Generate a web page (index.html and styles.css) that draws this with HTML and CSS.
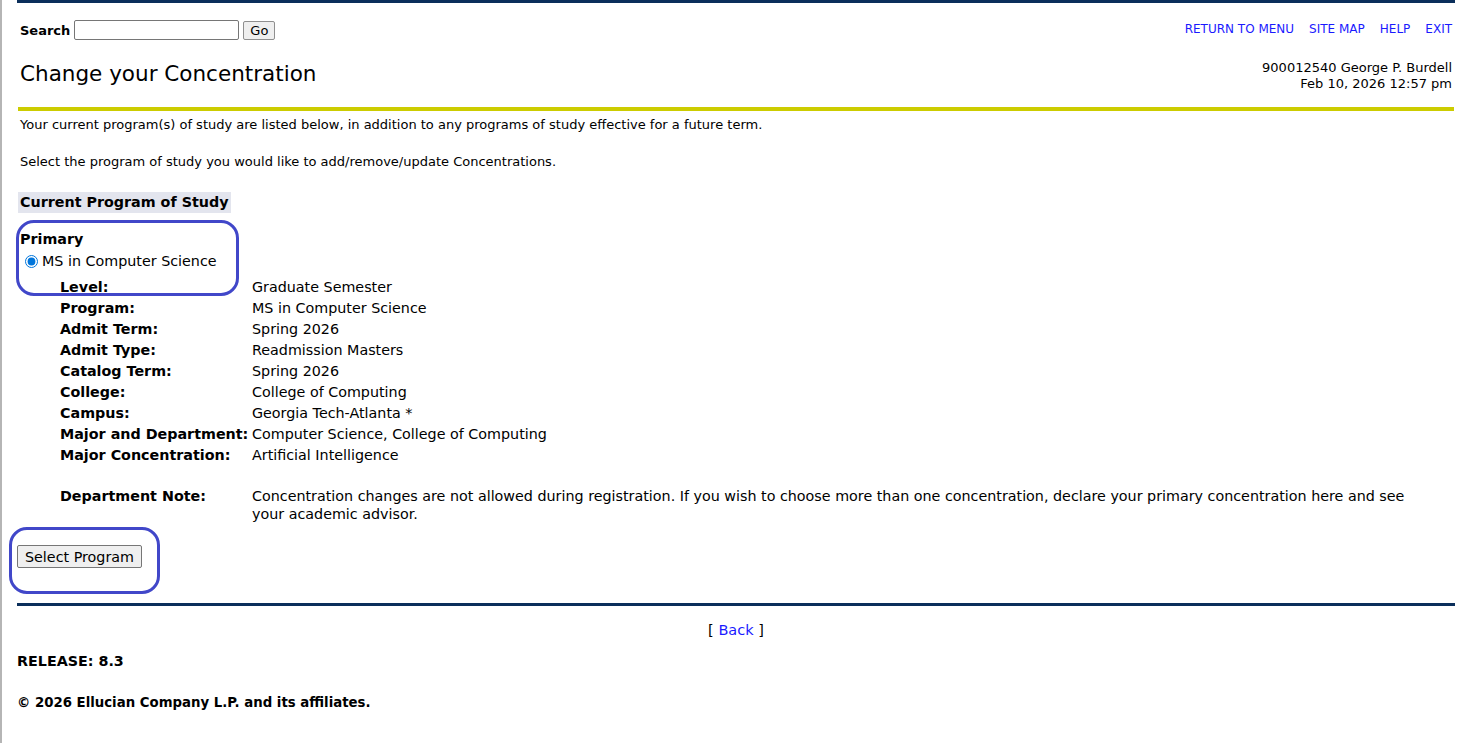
FILE: index.html
```html
<!DOCTYPE html>
<html lang="en">
  <head>
    <meta charset="UTF-8">
    <title>Change your Concentration</title>
    <link rel="stylesheet" href="styles.css">
  </head>
  <body>
    <div class="page">
      <div class="topbar"></div>

      <div class="header">
        <form class="search">
          <label for="keyword">Search</label>
          <input type="text" id="keyword" name="keyword">
          <button type="button" class="go">Go</button>
        </form>
        <nav class="menu">
          <a href="#">RETURN TO MENU</a>
          <a href="#">SITE MAP</a>
          <a href="#">HELP</a>
          <a href="#">EXIT</a>
        </nav>
      </div>

      <div class="title-row">
        <h1>Change your Concentration</h1>
        <div class="user-info">
          <div>900012540 George P. Burdell</div>
          <div>Feb 10, 2026 12:57 pm</div>
        </div>
      </div>
      <div class="rule-gold"></div>

      <p class="info">Your current program(s) of study are listed below, in addition to any programs of study effective for a future term.</p>
      <p class="info">Select the program of study you would like to add/remove/update Concentrations.</p>

      <form class="program">
        <div class="section-head">Current Program of Study</div>
        <div class="primary">Primary</div>
        <label class="choice"><input type="radio" name="program" checked>MS in Computer Science</label>

        <dl class="details">
          <dt>Level:</dt><dd>Graduate Semester</dd>
          <dt>Program:</dt><dd>MS in Computer Science</dd>
          <dt>Admit Term:</dt><dd>Spring 2026</dd>
          <dt>Admit Type:</dt><dd>Readmission Masters</dd>
          <dt>Catalog Term:</dt><dd>Spring 2026</dd>
          <dt>College:</dt><dd>College of Computing</dd>
          <dt>Campus:</dt><dd>Georgia Tech-Atlanta *</dd>
          <dt>Major and Department:</dt><dd>Computer Science, College of Computing</dd>
          <dt>Major Concentration:</dt><dd>Artificial Intelligence</dd>
          <dt class="note">Department Note:</dt>
          <dd class="note">Concentration changes are not allowed during registration. If you wish to choose more than one concentration, declare your primary concentration here and see your academic advisor.</dd>
        </dl>

        <button type="submit" class="select-btn">Select Program</button>
      </form>

      <div class="rule-navy"></div>

      <p class="back">[ <a href="#">Back</a> ]</p>
      <p class="release">RELEASE: 8.3</p>
      <p class="copyright">&copy; 2026 Ellucian Company L.P. and its affiliates.</p>

      <!-- hand-drawn highlight marks over the page -->
      <div class="mark mark-choice"></div>
      <div class="mark mark-button"></div>
    </div>
  </body>
</html>
```

FILE: styles.css
```css
body {
  margin: 0;
  border-left: 2px solid #b5b5b5;
  min-height: 743px;
  box-sizing: border-box;
  background: white;
  color: #000;
  font-family: "DejaVu Sans", Verdana, sans-serif;
  font-size: 13px;
}

.page {
  position: relative;
  margin: 0 19px 0 15px;
}

.topbar {
  height: 3px;
  background: #0b2f5b;
}

/* search + top menu */
.header {
  display: flex;
  justify-content: space-between;
  align-items: flex-start;
  padding: 17px 3px 0 3px;
  height: 30px;
}

.search {
  display: flex;
  align-items: center;
  gap: 4px;
}

.search label {
  font-weight: bold;
}

.search input {
  width: 159px;
  height: 14px;
  padding: 2px;
  margin: 0;
  border: 1px solid #767676;
  border-radius: 2px;
}

.go {
  font-family: inherit;
  font-size: 13px;
  padding: 0 6px;
  height: 19px;
  background: #efefef;
  border: 1px solid #8f8f8f;
  border-radius: 2px;
}

.menu {
  display: flex;
  gap: 15px;
  margin-top: 2px;
}

.menu a {
  color: #1a1aff;
  text-decoration: none;
  font-size: 12px;
}

/* page title */
.title-row {
  display: flex;
  justify-content: space-between;
  align-items: flex-start;
  padding: 0 3px;
  height: 57px;
}

.title-row h1 {
  margin: 11px 0 0;
  font-size: 21.5px;
  line-height: 25px;
  font-weight: normal;
}

.user-info {
  text-align: right;
  line-height: 16px;
  margin-top: 10px;
}

.rule-gold {
  height: 4px;
  background: #cccc00;
  margin: 0 1px;
}

.info {
  margin: 6px 0 0;
  padding: 0 3px;
  line-height: 16px;
}

.info + .info {
  margin-top: 21px;
}

/* program of study */
.program {
  font-size: 14.3px;
}

.section-head {
  display: inline-block;
  margin: 22px 0 0 1px;
  padding: 2px;
  line-height: 17px;
  background: #e3e5ee;
  font-weight: bold;
}

.primary {
  margin-top: 18px;
  padding: 0 3px;
  line-height: 17px;
  font-weight: bold;
}

.choice {
  display: flex;
  align-items: center;
  margin-top: 5px;
  padding-left: 7px;
  line-height: 17px;
}

.choice input {
  margin: 0 4px 0 1px;
  width: 13px;
  height: 13px;
  accent-color: #0075db;
}

.details {
  display: grid;
  grid-template-columns: 192px 1fr;
  margin: 7px 0 0;
  padding: 0 32px 0 43px;
  line-height: 21px;
}

.details dt {
  font-weight: bold;
}

.details dd {
  margin: 0;
}

.details .note {
  margin-top: 21px;
  line-height: 18px;
}

.select-btn {
  display: block;
  font-family: inherit;
  font-size: 14.3px;
  margin: 22px 0 0;
  height: 23px;
  padding: 0 7px;
  background: #efefef;
  border: 1px solid #767676;
  border-radius: 2px;
}

.rule-navy {
  height: 3px;
  background: #0b2f5b;
  margin-top: 35px;
}

.back {
  margin: 16px 0 0;
  line-height: 17px;
  text-align: center;
  font-size: 14.5px;
}

.back a {
  color: #1a1aff;
  text-decoration: none;
}

.release {
  margin: 14px 0 0;
  line-height: 17px;
  font-size: 14.3px;
  font-weight: bold;
}

.copyright {
  margin: 24px 0 0;
  line-height: 17px;
  font-size: 13.3px;
  font-weight: bold;
}

/* annotation outlines */
.mark {
  position: absolute;
  border: 3px solid #4147c9;
  border-radius: 18px;
}

.mark-choice {
  left: -1px;
  top: 220px;
  width: 217px;
  height: 70px;
}

.mark-button {
  left: -8px;
  top: 527px;
  width: 145px;
  height: 61px;
}
```
